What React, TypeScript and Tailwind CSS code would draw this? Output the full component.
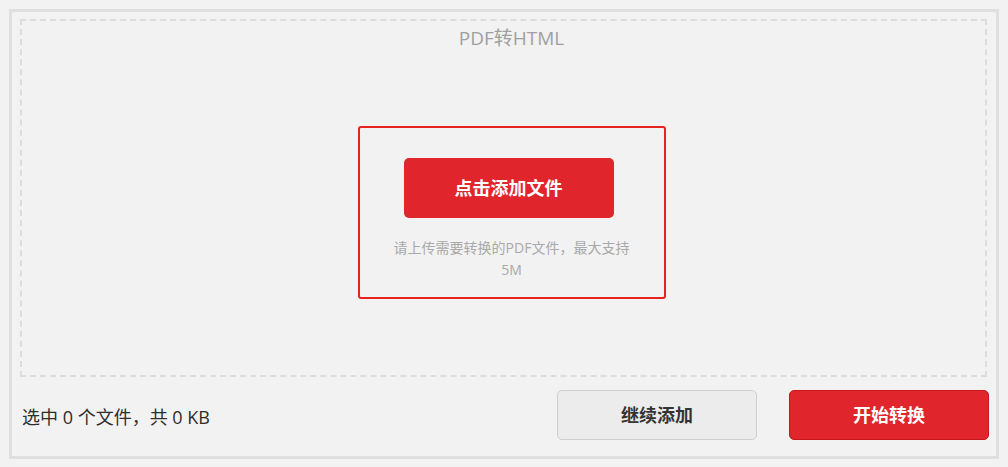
import { FC } from "react";

const font = { fontFamily: '"Open Sans", "Noto Sans CJK SC", sans-serif' };

const UploadBox: FC = () => {
  return (
    <div className="flex-none h-[358px] border-2 border-dashed border-[#dcdcdc] flex flex-col items-center pl-[16px]">
      <div className="mt-[5px] text-[19px] leading-[24px] text-[#a0a0a0]">PDF转HTML</div>
      <div className="mt-[76px] w-[308px] h-[173px] border-2 border-[#e8231f] rounded-[3px] flex flex-col items-center">
        <button className="mt-[30px] mr-[6px] w-[210px] h-[60px] rounded-[5px] bg-[#e0262c] text-white text-[18px] font-bold">
          点击添加文件
        </button>
        <div className="mt-[19px] w-[250px] text-center text-[14px] leading-[22px] text-[#a9a9a9]">
          请上传需要转换的PDF文件，最大支持5M
        </div>
      </div>
    </div>
  );
};

export default function App() {
  return (
    <div className="w-[1008px] h-[467px] bg-[#f2f2f2] pt-[9px] pl-[9px]" style={font}>
      <div className="w-[990px] h-[450px] border-[3px] border-[#dfdfdf] pt-[7px] pl-[8px] pr-[9px] flex flex-col">
        <UploadBox />
        <div className="flex items-center mt-[13px]">
          <div className="flex-1 pl-[2px] pt-[5px] text-[18px] text-[#2e2e2e]">选中 0 个文件，共 0 KB</div>
          <button className="ml-[1px] w-[200px] h-[50px] rounded-[5px] border border-[#cfcfcf] bg-[#ececec] text-[18px] font-bold text-[#333]">
            继续添加
          </button>
          <button className="ml-[32px] mr-[-2px] w-[200px] h-[50px] rounded-[5px] bg-[#e0262c] border border-[#c8161d] text-[18px] font-bold text-white">
            开始转换
          </button>
        </div>
      </div>
    </div>
  );
}
